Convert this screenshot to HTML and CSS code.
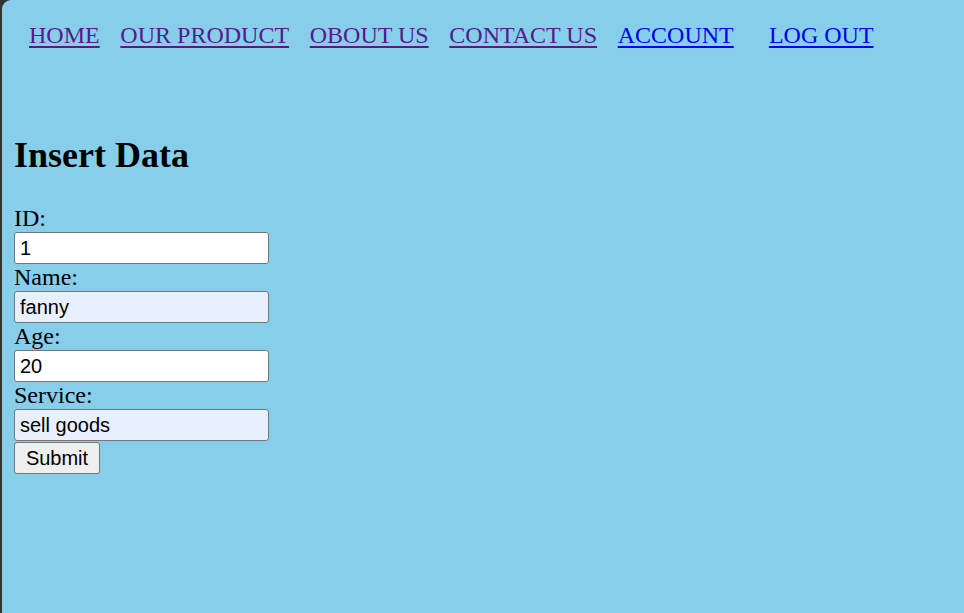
FILE: index.html
```html
<!DOCTYPE html>
<html lang="en">
<head>
<meta charset="utf-8">
<title>Insert Data</title>
<link rel="stylesheet" href="styles.css">
</head>
<body>
<div class="page">
  <nav class="nav">
    <a class="visited" href="#">HOME</a>
    <a class="visited" href="#">OUR PRODUCT</a>
    <a class="visited" href="#">OBOUT US</a>
    <a class="visited" href="#">CONTACT US</a>
    <a class="link" href="#">ACCOUNT</a>
    <a class="link logout" href="#">LOG OUT</a>
  </nav>
  <section class="content">
    <h1 class="title">Insert Data</h1>
    <form class="form">
      <label class="label">ID:</label>
      <input class="field" type="text" value="1">
      <label class="label">Name:</label>
      <input class="field autofill" type="text" value="fanny">
      <label class="label">Age:</label>
      <input class="field" type="text" value="20">
      <label class="label">Service:</label>
      <input class="field autofill" type="text" value="sell goods">
      <button class="submit" type="button">Submit</button>
    </form>
  </section>
</div>
</body>
</html>
```

FILE: styles.css
```css
html {
  margin: 0;
  padding: 0;
  background: #333333;
}
body {
  margin: 0;
  padding: 0 0 0 2px;
  background: #333333;
}
.page {
  background: #87ceeb;
  border-top-left-radius: 9px;
  min-height: 613px;
  box-sizing: border-box;
  padding: 22px 0 0 12px;
  font-family: "Liberation Serif", "Times New Roman", serif;
  font-size: 24px;
  color: #000;
}
.nav {
  display: flex;
  gap: 20.7px;
  padding-left: 15px;
  line-height: 27.6px;
}
.nav a {
  text-decoration: underline;
  text-decoration-thickness: 2px;
  text-underline-offset: 3px;
}
.visited {
  color: #551a8b;
}
.link {
  color: #0000ee;
}
.logout {
  margin-left: 14.5px;
}
.content {
  padding-top: 85px;
}
.title {
  margin: 0 0 29px 0;
  font-size: 36px;
  font-weight: bold;
  line-height: 41.4px;
}
.form {
  display: flex;
  flex-direction: column;
  align-items: flex-start;
}
.label {
  display: block;
  line-height: 27px;
  height: 27px;
}
.field {
  box-sizing: border-box;
  width: 255px;
  height: 32px;
  margin: 0;
  padding: 0 5px;
  border: 1px solid #767676;
  border-radius: 3px;
  background: #ffffff;
  font-family: "Liberation Sans", Arial, sans-serif;
  font-size: 20px;
  color: #000;
}
.autofill {
  background: #e8f0fe;
}
.submit {
  box-sizing: border-box;
  width: 86px;
  height: 32px;
  margin: 1px 0 0 0;
  padding: 0;
  border: 1px solid #767676;
  border-radius: 3px;
  background: #efefef;
  font-family: "Liberation Sans", Arial, sans-serif;
  font-size: 20px;
  color: #000;
}
```
